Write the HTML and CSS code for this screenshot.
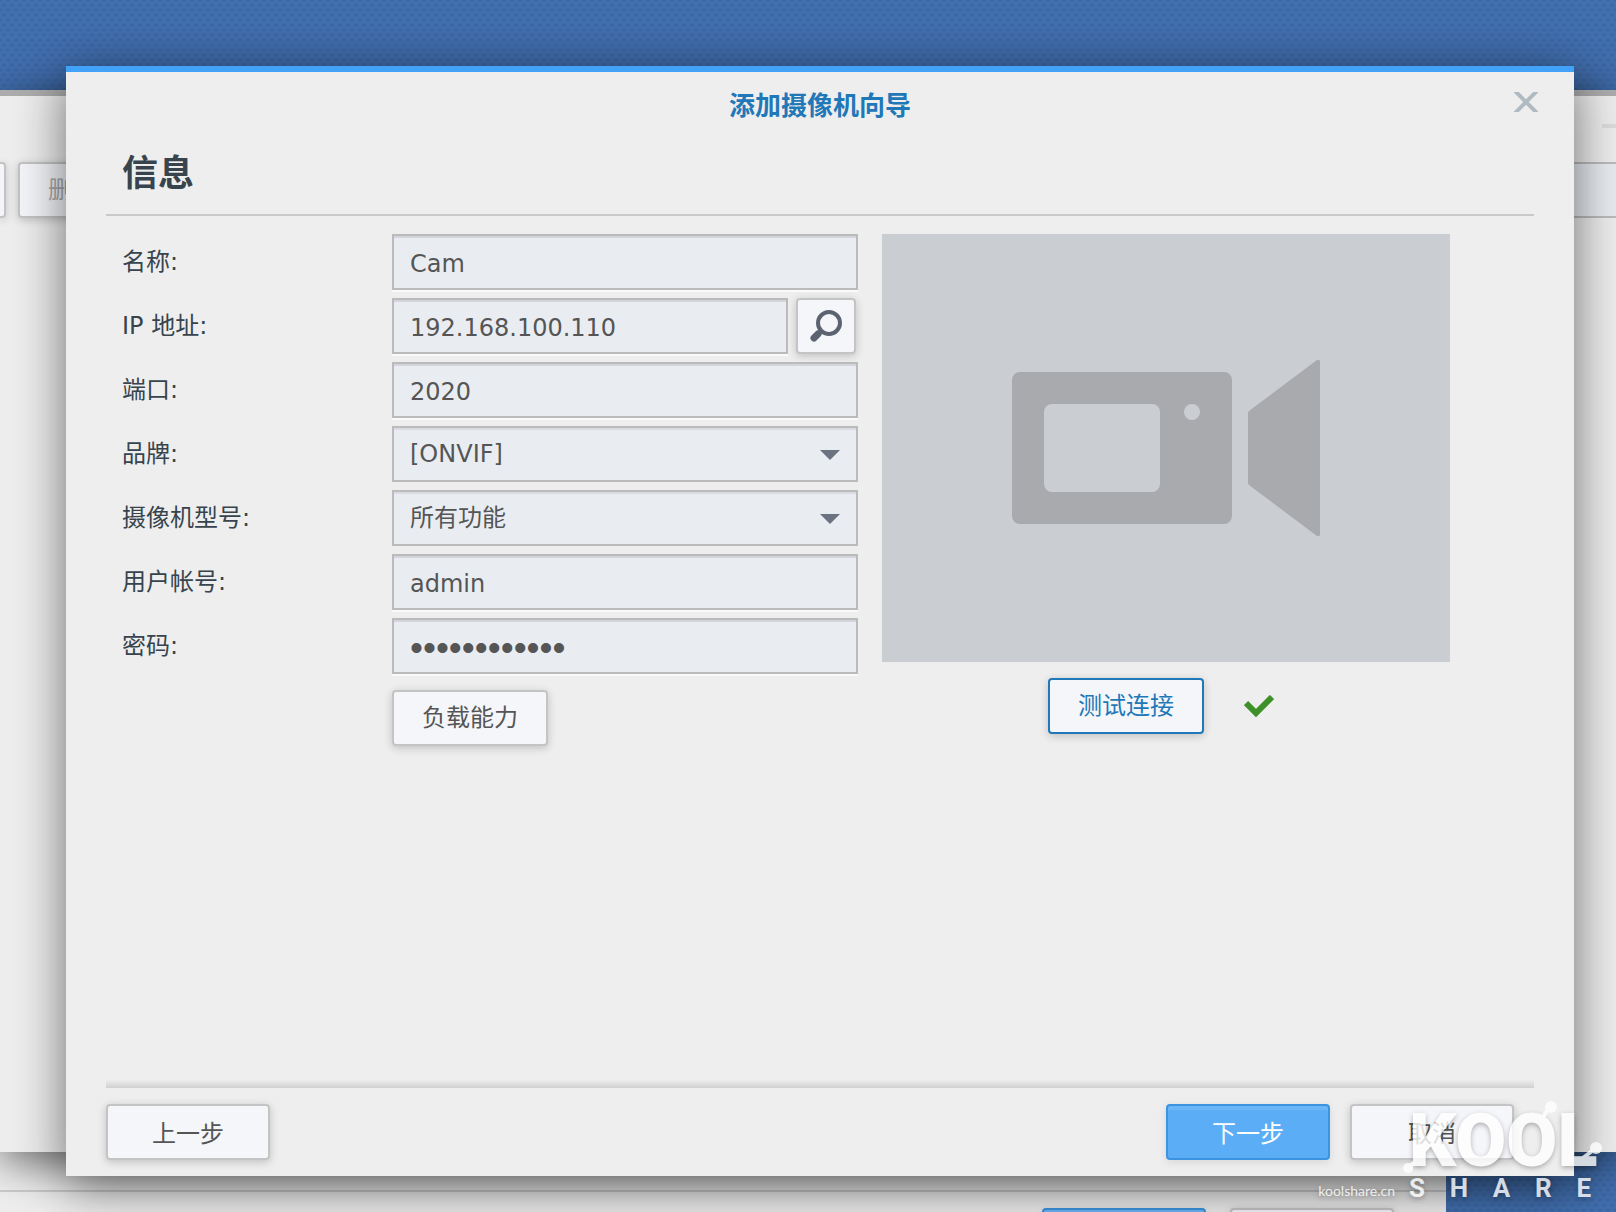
FILE: index.html
```html
<!DOCTYPE html>
<html lang="zh-CN">
<head>
<meta charset="utf-8">
<meta name="viewport" content="width=device-width, initial-scale=1">
<title>添加摄像机向导</title>
<link rel="stylesheet" href="styles.css">
</head>
<body>
<div class="desktop">
  <section class="back-dialog">
    <footer class="back-footer">
      <button class="btn btn-wide btn-primary" type="button" aria-label="下一步"></button>
      <button class="btn btn-wide" type="button" aria-label="取消"></button>
    </footer>
  </section>

  <section class="app-window">
    <div class="window-controls"><span class="minimize"></span></div>
    <div class="toolbar">
      <button class="btn tool-first" type="button" aria-label="添加"></button>
      <button class="btn tool-delete" type="button" disabled>删除</button>
      <input class="field tool-search" type="text" aria-label="搜索">
    </div>
  </section>

  <main class="wizard">
    <header class="wizard-header">
      <h1 class="wizard-title">添加摄像机向导</h1>
      <button class="close" type="button" aria-label="关闭">
        <svg width="24" height="20" viewBox="0 0 24 20"><path d="M1-1 23 21M23-1 1 21" stroke="#afbac1" stroke-width="4" fill="none"/></svg>
      </button>
    </header>
    <div class="wizard-body">
      <h2 class="step-title">信息</h2>
      <div class="columns">
        <form class="form">
          <div class="row"><label for="name">名称:</label><input class="field" id="name" type="text" value="Cam"></div>
          <div class="row"><label for="ip">IP 地址:</label>
            <div class="with-button">
              <input class="field" id="ip" type="text" value="192.168.100.110">
              <button class="btn btn-icon" type="button" aria-label="搜索">
                <svg width="32" height="32" viewBox="0 0 32 32" fill="none" stroke="#5b6371"><circle cx="19" cy="13" r="11" stroke-width="4"/><path d="m11 21-4 4" stroke-width="5"/><path d="m8 24-4 4" stroke-width="7" stroke-linecap="round"/></svg>
              </button>
            </div>
          </div>
          <div class="row"><label for="port">端口:</label><input class="field" id="port" type="text" value="2020"></div>
          <div class="row"><label for="brand">品牌:</label>
            <div class="select"><select class="field" id="brand"><option>[ONVIF]</option></select></div>
          </div>
          <div class="row"><label for="model">摄像机型号:</label>
            <div class="select"><select class="field" id="model"><option>所有功能</option></select></div>
          </div>
          <div class="row"><label for="user">用户帐号:</label><input class="field" id="user" type="text" value="admin"></div>
          <div class="row"><label for="pass">密码:</label><input class="field password" id="pass" type="password" value="abcdefghijkl"></div>
          <div class="form-action"><button class="btn" type="button">负载能力</button></div>
        </form>
        <div class="preview">
          <div class="preview-screen">
            <svg class="camera" viewBox="0 0 308 176">
              <g fill="#a9aaae">
                <path fill-rule="evenodd" d="M8 12h204a8 8 0 0 1 8 8v136a8 8 0 0 1-8 8H8a8 8 0 0 1-8-8V20a8 8 0 0 1 8-8ZM40 44a8 8 0 0 0-8 8v72a8 8 0 0 0 8 8h100a8 8 0 0 0 8-8V52a8 8 0 0 0-8-8ZM180 44a8 8 0 1 0 0 16 8 8 0 0 0 0-16Z"/>
                <path d="M237 51 305 0q3-1 3 2v172q0 3-3 2l-68-51q-1-1-1-3V54q0-2 1-3Z"/>
              </g>
            </svg>
          </div>
          <div class="test-row">
            <button class="btn btn-outline" type="button">测试连接</button>
            <svg width="30" height="22" viewBox="0 0 30 22"><path d="m2 8 10 10L28 2" fill="none" stroke="#3d9128" stroke-width="6"/></svg>
          </div>
        </div>
      </div>
    </div>
    <footer class="wizard-footer">
      <button class="btn btn-wide" type="button">上一步</button>
      <button class="btn btn-wide btn-primary push" type="button">下一步</button>
      <button class="btn btn-wide" type="button">取消</button>
    </footer>
  </main>

  <div class="watermark">
    <span class="mark-site">koolshare.cn</span>
    <div class="mark-logo">
      <svg class="mark-dots" width="200" height="76" viewBox="0 0 200 76" fill="#fff"><circle cx="148" cy="7" r="6"/><path d="m145 9-6 10" stroke="#fff" stroke-width="4"/><circle cx="193" cy="48" r="6"/><path d="m189 51-9 7" stroke="#fff" stroke-width="4"/><circle cx="5" cy="68" r="5"/><path d="m7 66 8-7" stroke="#fff" stroke-width="4"/></svg>
      <span class="mark-kool">KOOL</span>
      <span class="mark-share"><span>S</span><span>H</span><span>A</span><span>R</span><span>E</span></span>
    </div>
  </div>
</div>
</body>
</html>
```
FILE: styles.css
```css
* { box-sizing: border-box; }

body {
  margin: 0;
  font-family: "DejaVu Sans", "Noto Sans CJK SC", sans-serif;
  font-size: 24px;
  line-height: 32px;
  color: #555;
}

button, input, select { font: inherit; color: inherit; margin: 0; }

.desktop {
  position: relative;
  min-height: 100vh;
  overflow: hidden;
  background-color: #426fae;
  background-image:
    radial-gradient(ellipse 3px 2px, rgba(20, 60, 120, .22), transparent),
    radial-gradient(ellipse 3px 2px, rgba(20, 60, 120, .22), transparent);
  background-size: 8px 10px;
  background-position: 0 0, 4px 5px;
}

/* Windows stacked on the desktop */
.back-dialog {
  position: absolute;
  left: 0;
  right: 170px;
  bottom: 0;
  height: 200px;
  display: flex;
  flex-direction: column;
  justify-content: flex-end;
  background: #eee;
}

.back-footer {
  display: flex;
  justify-content: flex-end;
  gap: 24px;
  height: 22px;
  padding: 16px 52px 0 0;
  border-top: 2px solid #ccc;
}

.app-window {
  position: absolute;
  inset: 90px 0 60px;
  background: #eee;
  border-top: 6px solid #adadad;
  box-shadow: 0 10px 40px rgba(0, 0, 0, .55);
}

.window-controls {
  display: flex;
  justify-content: flex-end;
  height: 66px;
  padding-top: 28px;
}

.minimize { width: 14px; height: 4px; background: #ddd; }

.toolbar { display: flex; gap: 12px; }
.toolbar .tool-first { width: 6px; padding: 0; border-left: 0; border-radius: 0 4px 4px 0; }
.toolbar .tool-search { width: 60px; margin-left: auto; border-right: 0; box-shadow: none; }

.wizard {
  position: absolute;
  inset: 66px 42px 36px 66px;
  display: flex;
  flex-direction: column;
  padding: 0 40px 16px;
  background: #eee;
  border-top: 6px solid #42a1f8;
  box-shadow: 0 10px 48px rgba(0, 0, 0, .55);
}

.wizard-header {
  display: grid;
  grid-template-columns: 60px 1fr 60px;
  align-items: center;
  height: 66px;
}

.wizard-title {
  grid-column: 2;
  margin: 0;
  padding-top: 2px;
  font-size: 26px;
  text-align: center;
  color: #2178b8;
}

.close {
  justify-self: end;
  display: flex;
  margin: 0 -4px 6px 0;
  padding: 0;
  border: 0;
  background: none;
}

.wizard-body { flex: 1; }

.step-title {
  margin: 0;
  padding: 4px 16px 8px;
  font-size: 36px;
  line-height: 64px;
  color: #37444d;
  border-bottom: 2px solid #c9c9c9;
}

.columns {
  display: grid;
  grid-template-columns: minmax(0, 736fr) minmax(0, 568fr);
  gap: 24px;
  padding: 18px 84px 0 16px;
}

.form { display: flex; flex-direction: column; gap: 8px; }

.row { display: grid; grid-template-columns: 270px minmax(0, 1fr); align-items: center; color: #37444d; }

.field {
  width: 100%;
  height: 56px;
  padding: 4px 16px 0;
  color: #555;
  background: #e9edf2;
  border: 2px solid #bbb;
  border-radius: 0;
  box-shadow: inset 0 2px #d2d5d9, 0 2px #fafafa;
  outline: 0;
}

.password { font-family: "Liberation Sans", sans-serif; font-size: 37px; }

.with-button { display: flex; gap: 8px; padding-right: 2px; }
.with-button .field { flex: 1; min-width: 0; }

.select { position: relative; }
.select .field { display: block; padding-top: 0; appearance: none; box-shadow: inset 0 2px #d9dce1; }
.select::after {
  content: "";
  position: absolute;
  right: 18px;
  top: 24px;
  border: 10px solid transparent;
  border-top-color: #6b7380;
  border-bottom: 0;
  pointer-events: none;
}

.form-action { padding: 8px 0 0 270px; }

.btn {
  display: block;
  height: 56px;
  padding: 0 28px;
  color: #555;
  background: #f5f6fa;
  border: 2px solid #c4c4c4;
  border-radius: 4px;
  box-shadow: 0 2px 8px rgba(0, 0, 0, .2);
}

.btn:disabled { color: #aaa; }
.btn-icon { display: flex; align-items: center; justify-content: center; width: 60px; padding: 0; }
.btn-wide { flex: none; width: 164px; padding: 4px 0 0; }

.btn-primary {
  color: #fff;
  background: #5badf6;
  border-color: #3c93df;
  box-shadow: inset 0 4px #6cb6f7, 0 2px 8px rgba(0, 0, 0, .1);
}

.btn-outline { color: #2178b8; border-color: #2178b8; }

.preview-screen {
  display: flex;
  align-items: center;
  justify-content: center;
  aspect-ratio: 568 / 428;
  background: #cacdd2;
}

.camera { width: 308px; max-width: 80%; }

.test-row {
  display: flex;
  align-items: center;
  justify-content: center;
  gap: 40px;
  padding: 16px 10px 0 0;
}

.wizard-footer { display: flex; gap: 20px; padding: 24px 20px 0 0; position: relative; }
.wizard-footer::before {
  content: "";
  position: absolute;
  inset: 0 0 auto;
  height: 8px;
  background: linear-gradient(#ececec, #d0d0d0);
}
.push { margin-left: auto; }

/* Site watermark over the corner */
.watermark {
  position: absolute;
  right: 16px;
  bottom: 10px;
  display: flex;
  align-items: flex-end;
  gap: 8px;
  color: #fff;
  text-shadow: 0 2px 5px rgba(0, 0, 0, .35);
  opacity: .8;
  pointer-events: none;
}

.mark-site { font: 14px/22px Lato, sans-serif; }
.mark-logo { position: relative; width: 197px; padding: 0 9px 0 6px; }
.mark-dots { position: absolute; left: 0; top: 0; }
.mark-kool { display: block; padding-top: 8px; font: 900 74px/66px Roboto, sans-serif; }
.mark-share { display: flex; justify-content: space-between; font: 700 26px/28px Roboto, sans-serif; }
```
